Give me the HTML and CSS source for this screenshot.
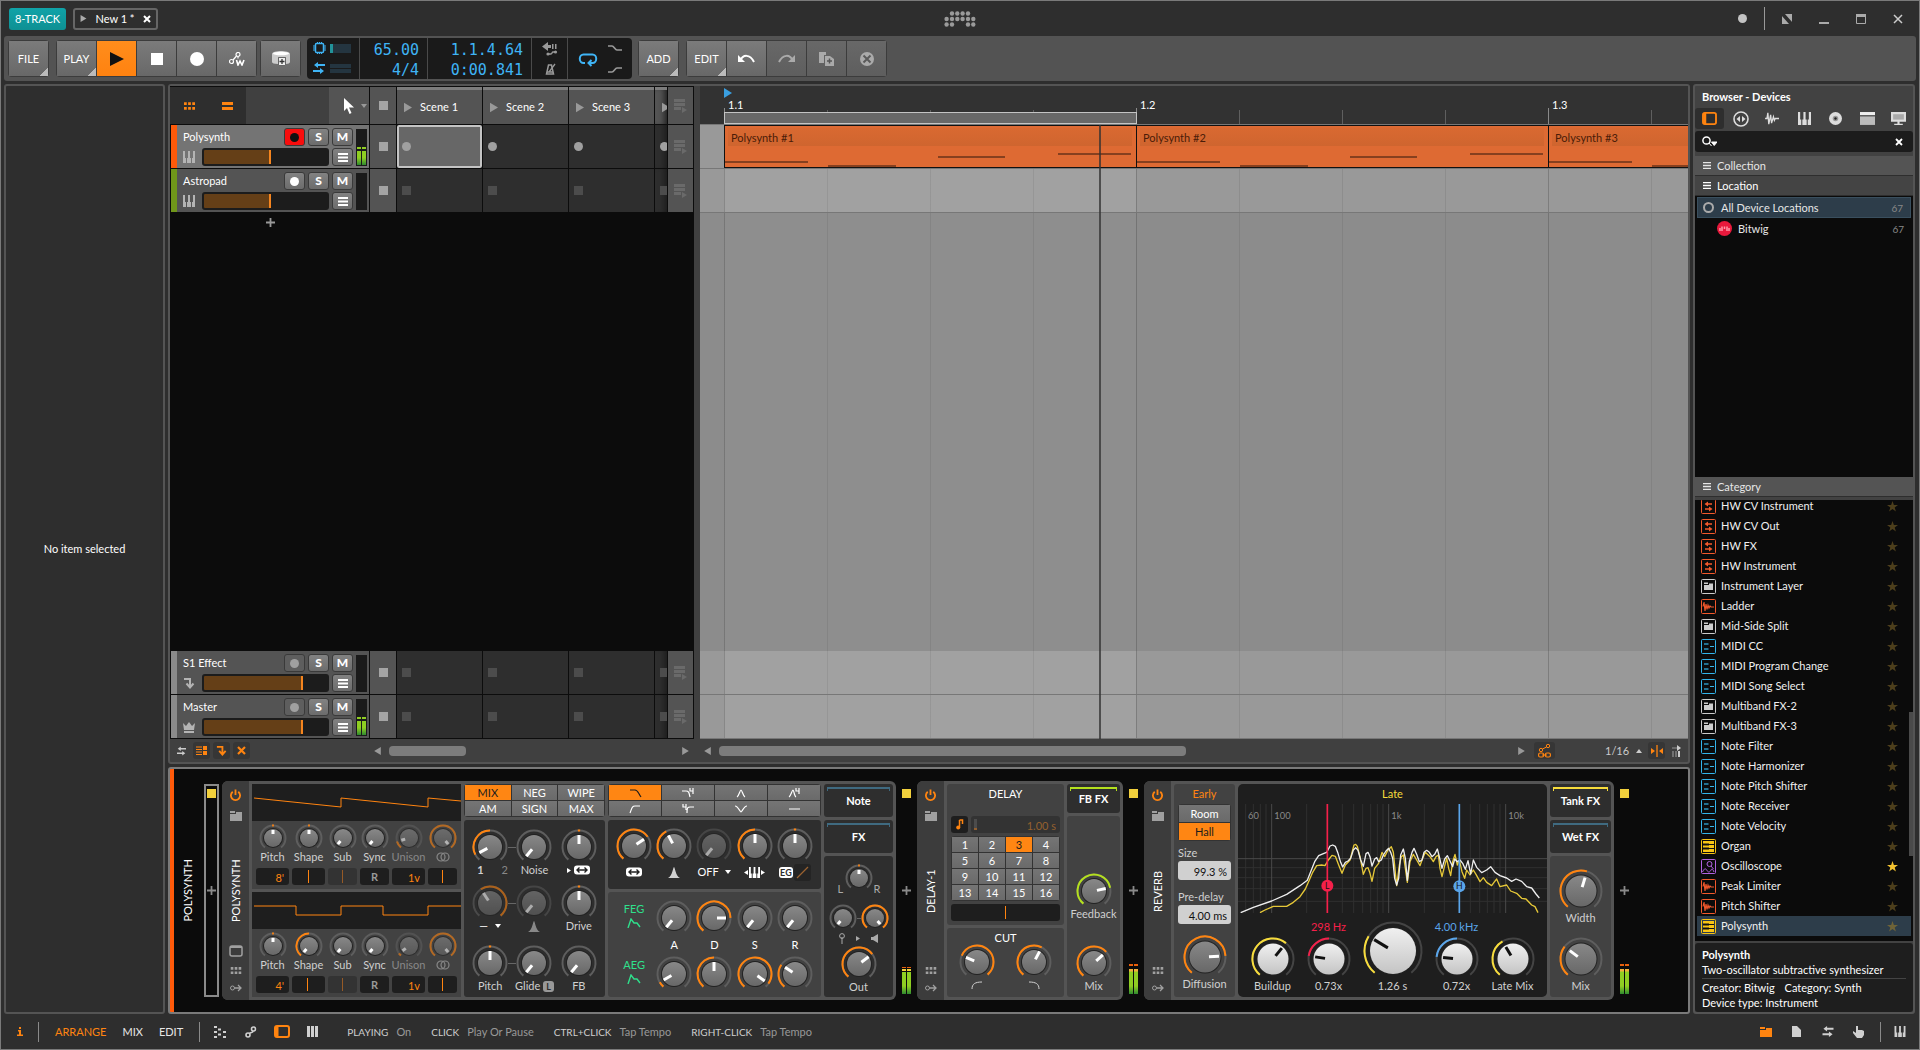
FILE: index.html
```html
<!DOCTYPE html>
<html lang="en">
<head>
    <meta charset="UTF-8">
    <meta name="viewport" content="width=device-width, initial-scale=1.0">
    <title>New 1 - Bitwig Studio</title>
    <link rel="stylesheet" href="styles.css">
</head>
<body>
    <!-- shared icons -->
    <svg class="sprite" aria-hidden="true">
        <symbol id="i-play" viewBox="0 0 10 12"><path d="M0 0 10 6 0 12z" fill="currentColor"/></symbol>
        <symbol id="i-piano" viewBox="0 0 12 12"><path d="M0 0h2v7h1v5H0zM5 0h2v7h1v5H4V7h1zM10 0h2v12H9V7h1z" fill="currentColor"/></symbol>
        <symbol id="i-menu" viewBox="0 0 10 9"><path d="M0 1h10M0 4.5h10M0 8h10" stroke="currentColor" stroke-width="2"/></symbol>
        <symbol id="i-end" viewBox="0 0 13 14"><path d="M0 1.5h11M0 5.5h11M0 9.5h7" stroke="currentColor" stroke-width="3"/><path d="M8 8l5 3-5 3z" fill="currentColor"/></symbol>
        <symbol id="i-swap" viewBox="0 0 12 12"><path d="M12 3H4M0 9h8" stroke="currentColor" stroke-width="2"/><path d="M5 0 1 3l4 3zM7 6l4 3-4 3z" fill="currentColor"/></symbol>
        <symbol id="i-send" viewBox="0 0 12 12"><path d="M1 2h6v8M3.5 6.5 7 10.5l3.500-4" fill="none" stroke="currentColor" stroke-width="2"/></symbol>
        <symbol id="i-power" viewBox="0 0 12 12"><path d="M3 2.5a5 5 0 1 0 6 0M6 0v6" fill="none" stroke="currentColor" stroke-width="2"/></symbol>
        <symbol id="i-folder" viewBox="0 0 12 10"><path d="M0 0h5v2H0zM0 3h6V1h6v9H0z" fill="currentColor"/></symbol>
        <symbol id="i-grid" viewBox="0 0 12 8"><path d="M0 1.5h3M4.5 1.5h3M9 1.5h3M0 6.5h3M4.5 6.5h3M9 6.5h3" stroke="currentColor" stroke-width="3"/></symbol>
        <symbol id="i-mod" viewBox="0 0 12 8"><circle cx="2.5" cy="4" r="2" fill="none" stroke="currentColor"/><path d="M4.5 4H11M8 1l3 3-3 3" fill="none" stroke="currentColor" stroke-width="1.3"/></symbol>
        <symbol id="i-frame" viewBox="0 0 14 12"><rect x="1" y="1" width="12" height="10" rx="2" fill="none" stroke="currentColor" stroke-width="1.5"/><path d="M1 2h12" stroke="currentColor" stroke-width="2"/></symbol>
        <symbol id="i-plus" viewBox="0 0 10 10"><path d="M5 0v10M0 5h10" stroke="currentColor" stroke-width="2"/></symbol>
        <symbol id="i-peak" viewBox="0 0 12 11"><path d="M6 0c1 0 1.5 9 6 11H0C4.5 9 5 0 6 0z" fill="currentColor"/></symbol>
        <symbol id="i-wide" viewBox="0 0 16 9"><rect width="16" height="9" rx="3" fill="currentColor"/><path d="M3 4.5h10M5.5 2 3 4.5 5.5 7M10.5 2 13 4.5 10.5 7" fill="none" stroke="#222" stroke-width="1.4"/></symbol>
        <symbol id="i-rings" viewBox="0 0 14 10"><circle cx="5" cy="5" r="4" fill="none" stroke="currentColor" stroke-width="1.2"/><circle cx="9" cy="5" r="4" fill="none" stroke="currentColor" stroke-width="1.2"/></symbol>
        <symbol id="i-env" viewBox="0 0 14 10"><path d="M1 10 4 1l3 4h3l3 4" fill="none" stroke="currentColor" stroke-width="1.4"/></symbol>
        <symbol id="i-star" viewBox="0 0 12 12"><path d="M6 0l1.5 4.3H12L8.4 7 9.7 11.5 6 8.8 2.3 11.5 3.6 7 0 4.3h4.5z" fill="currentColor"/></symbol>
        <symbol id="i-bars" viewBox="0 0 8 7"><path d="M0 .5h8M0 3.5h8M0 6.5h8" stroke="currentColor" stroke-width="1.4"/></symbol>
        <symbol id="i-tri" viewBox="0 0 6 4"><path d="M0 0h6L3 4z" fill="currentColor"/></symbol>
        <symbol id="d-hw" viewBox="0 0 15 15"><rect x=".5" y=".5" width="14" height="14" rx="1" fill="none" stroke="currentColor"/><path d="M11 5H5M4 10h6" stroke="currentColor" stroke-width="1.3"/><path d="M7 2.5 3.5 5 7 7.5zM8 7.5l3.5 2.5L8 12.5z" fill="currentColor"/></symbol>
        <symbol id="d-layer" viewBox="0 0 15 15"><rect x=".5" y=".5" width="14" height="14" rx="1" fill="none" stroke="currentColor"/><path d="M3 3.5h4V5H3zM3 6h5V4.5h4V11H3z" fill="currentColor"/></symbol>
        <symbol id="d-audio" viewBox="0 0 15 15"><rect x=".5" y=".5" width="14" height="14" rx="1" fill="none" stroke="currentColor"/><path d="M2 7.5 3 3l1 9 1-7 1 5.5L7 6l1 3 1-2 1 1h3" fill="none" stroke="currentColor" stroke-width="1.1"/></symbol>
        <symbol id="d-note" viewBox="0 0 15 15"><rect x=".5" y=".5" width="14" height="14" rx="1" fill="none" stroke="currentColor"/><path d="M3 5h4.5M3 10h4.5" stroke="currentColor" stroke-width="2" opacity=".6"/><path d="M9 7.5h4" stroke="currentColor"/></symbol>
        <symbol id="d-synth" viewBox="0 0 15 15"><rect x=".5" y=".5" width="14" height="14" rx="1" fill="none" stroke="currentColor"/><path d="M2 2h11v11H2z" fill="currentColor"/><path d="M2 5.5h11M2 9.5h11" stroke="#111"/><path d="M2 5.5h6M2 9.5h6" stroke="#111" stroke-width="2"/></symbol>
        <symbol id="d-scope" viewBox="0 0 15 15"><rect x=".5" y=".5" width="14" height="14" rx="1" fill="none" stroke="currentColor"/><circle cx="8.5" cy="5" r="2.5" fill="none" stroke="currentColor"/><path d="M10 7l2.5 3M1.5 13c2-4 3-4 4.5-1.5s3 1.5 4-.5 2-.5 3 2" fill="none" stroke="currentColor"/></symbol>
        <symbol id="clip-notes" viewBox="0 0 411 43"><path d="M0 36h83M103 40h68M213 31h67M333 28h73" stroke="#86401f" stroke-width="2"/></symbol>
    </svg>

    <div class="window">
        <header class="titlebar">
            <button class="template">8-TRACK</button>
            <div class="doc-tab">
                <svg class="doc-play"><use href="#i-play"/></svg>
                <span>New 1 *</span>
                <button class="plain" aria-label="Close project"><svg class="x-icon" viewBox="0 0 8 8"><path d="M1 1l6 6M7 1 1 7" stroke="currentColor" stroke-width="2"/></svg></button>
            </div>
            <div class="logo-wrap">
                <svg class="logo" viewBox="0 0 32 16" role="img" aria-label="Bitwig">
                    <g fill="#9a9a9a">
                        <circle cx="8" cy="2.5" r="2.2"/><circle cx="13.3" cy="2.5" r="2.2"/><circle cx="18.6" cy="2.5" r="2.2"/><circle cx="24" cy="2.5" r="2.2"/>
                        <circle cx="2.6" cy="8" r="2.2"/><circle cx="8" cy="8" r="2.2"/><circle cx="13.3" cy="8" r="2.2"/><circle cx="18.6" cy="8" r="2.2"/><circle cx="24" cy="8" r="2.2"/><circle cx="29.3" cy="8" r="2.2"/>
                        <circle cx="2.6" cy="13.5" r="2.2"/><circle cx="8" cy="13.5" r="2.2"/><circle cx="24" cy="13.5" r="2.2"/><circle cx="29.3" cy="13.5" r="2.2"/>
                    </g>
                </svg>
            </div>
            <div class="window-buttons">
                <span class="status-dot"></span>
                <span class="win-divider"></span>
                <button class="plain" aria-label="Full screen"><svg viewBox="0 0 10 10"><path d="M0 2v8h7zM3 0h7v8z" fill="#aaa"/><path d="M0 0l10 10" stroke="#2e2e2e" stroke-width="2"/></svg></button>
                <button class="plain" aria-label="Minimize"><svg viewBox="0 0 10 10"><path d="M0 9h10" stroke="#aaa" stroke-width="2"/></svg></button>
                <button class="plain" aria-label="Maximize"><svg viewBox="0 0 10 10"><path d="M.5.5h9v9h-9z" fill="none" stroke="#aaa"/><path d="M0 1.5h10" stroke="#aaa" stroke-width="3"/></svg></button>
                <button class="plain" aria-label="Close"><svg viewBox="0 0 10 10"><path d="M1 1l8 8M9 1 1 9" stroke="#ccc" stroke-width="1.5"/></svg></button>
            </div>
        </header>

        <div class="toolbar">
            <div class="btn-group"><button class="tool has-menu">FILE</button></div>
            <div class="btn-group transport">
                <button class="tool has-menu">PLAY</button>
                <button class="tool active" aria-label="Play"><svg width="14" height="14"><path d="M0 0l14 7-14 7z" fill="#111"/></svg></button>
                <button class="tool" aria-label="Stop"><svg width="12" height="12"><path d="M0 0h12v12H0z" fill="#fff"/></svg></button>
                <button class="tool" aria-label="Record"><svg width="14" height="14"><circle cx="7" cy="7" r="7" fill="#fff"/></svg></button>
                <button class="tool" aria-label="Automation write"><svg width="16" height="14" viewBox="0 0 16 14"><circle cx="2.5" cy="9.5" r="2" fill="none" stroke="#fff" stroke-width="1.2"/><circle cx="9" cy="2.5" r="2" fill="none" stroke="#fff" stroke-width="1.2"/><path d="M4 8l3.5-4M9 4.5v2" stroke="#fff" stroke-width="1.2" fill="none"/><path d="M7.5 8l1.5 5 2-4 2 4 2-5" fill="none" stroke="#fff" stroke-width="1.6"/></svg></button>
            </div>
            <div class="btn-group"><button class="tool" aria-label="Capture"><svg width="18" height="15" viewBox="0 0 18 15"><path d="M0 3c0-4 18-4 18 0v8c0 1-2 2-4 2V6H6v7c-4 0-6-1-6-2z" fill="#ccc"/><ellipse cx="9" cy="2.5" rx="8" ry="1.8" fill="#fff"/><path d="M6.5 6.5h7v8h-7z" fill="#eee" stroke="#666"/><path d="M10 8v5M7.5 10.5h5" stroke="#333" stroke-width="1.3"/></svg></button></div>

            <div class="display">
                <div class="cell cell-meters">
                    <svg width="13" height="12" viewBox="0 0 13 12"><rect x="2.5" y="1.5" width="8" height="9" rx="1" fill="none" stroke="#3fb4f5" stroke-width="1.5"/><path d="M4.5 0v1M6.5 0v1M8.5 0v1M4.5 11v1M6.5 11v1M8.5 11v1M0 4h2M0 6h2M0 8h2M11 4h2M11 6h2M11 8h2" stroke="#3fb4f5"/></svg>
                    <span class="load"><i></i></span>
                    <svg class="io" width="12" height="12"><use href="#i-swap"/></svg>
                    <span class="io-bars"><i></i><i></i></span>
                </div>
                <div class="cell cell-tempo"><span>65.00</span><span>4/4</span></div>
                <div class="cell cell-pos"><span>1.1.4.64</span><span>0:00.841</span></div>
                <div class="cell cell-click">
                    <svg width="16" height="14" viewBox="0 0 16 14"><path d="M0 4.5 6 0v3h3v3H6v3zM10 2h1.5v5H10zM13 2h1.5v5H13z" fill="#999"/><path d="M7 12h2c1 0 1-2 2-2h2" fill="none" stroke="#999" stroke-width="1.5"/><circle cx="6" cy="12" r="1.6" fill="#999"/><circle cx="13.5" cy="10" r="1.6" fill="#999"/></svg>
                    <svg width="12" height="12" viewBox="0 0 12 12"><path d="M4.5 2h3l2 9h-7z" fill="none" stroke="#999" stroke-width="1.5"/><path d="M5 9 11 1M3 9h6" stroke="#999" stroke-width="1.3"/></svg>
                </div>
                <div class="cell cell-loop">
                    <svg width="18" height="12" viewBox="0 0 18 12"><path d="M6 10H4.5A3.5 4 0 0 1 4.5 1.500h9a3.5 4 0 0 1 0 8.500H10M12.5 7 9.5 10l3 3" fill="none" stroke="#3fb4f5" stroke-width="2"/></svg>
                    <div class="punch">
                        <svg width="14" height="6" viewBox="0 0 14 6"><path d="M0 1h4c2 0 3 4 5 4h5" fill="none" stroke="#999" stroke-width="1.6"/></svg>
                        <svg width="14" height="6" viewBox="0 0 14 6"><path d="M0 5h4c2 0 3-4 5-4h5" fill="none" stroke="#999" stroke-width="1.6"/></svg>
                    </div>
                </div>
            </div>

            <div class="btn-group"><button class="tool has-menu">ADD</button></div>
            <div class="btn-group">
                <button class="tool has-menu">EDIT</button>
                <button class="tool" aria-label="Undo"><svg width="17" height="9" viewBox="0 0 17 9"><path d="M2 7c3-7 10-7 14 1" fill="none" stroke="#fff" stroke-width="2"/><path d="M0 1v7h7z" fill="#fff"/></svg></button>
                <button class="tool dim" aria-label="Redo"><svg width="17" height="9" viewBox="0 0 17 9"><path d="M1 8C5 0 12 0 15 7" fill="none" stroke="#aaa" stroke-width="2"/><path d="M17 1v7h-7z" fill="#aaa"/></svg></button>
                <button class="tool dim" aria-label="Duplicate"><svg width="15" height="14" viewBox="0 0 15 14"><path d="M0 0h7v3H5v8H0z" fill="#aaa"/><path d="M6 4h5l4 3v7H6z" fill="#aaa"/><path d="M10.5 6.5v5M8 9h5" stroke="#555" stroke-width="1.5"/></svg></button>
                <button class="tool dim" aria-label="Delete"><svg width="14" height="14" viewBox="0 0 14 14"><circle cx="7" cy="7" r="7" fill="#aaa"/><path d="M3.5 3.5l7 7M10.5 3.5l-7 7" stroke="#5a5a5a" stroke-width="2"/></svg></button>
            </div>
        </div>

        <main class="workspace">
            <aside class="inspector">No item selected</aside>

            <div class="center">
                <section class="arranger">
                    <div class="launcher">
                        <div class="row row-head">
                            <div class="head-tools">
                                <div class="view-toggles">
                                    <button class="plain" aria-label="Clip launcher"><svg width="11" height="8"><use href="#i-grid"/></svg></button>
                                    <button class="plain" aria-label="Arranger"><svg width="11" height="8" viewBox="0 0 11 8"><path d="M0 1.5h11M0 6.5h11" stroke="currentColor" stroke-width="3"/></svg></button>
                                </div>
                                <button class="plain pointer-tool" aria-label="Pointer tool">
                                    <svg width="10" height="16" viewBox="0 0 10 16"><path d="M0 0v13l3-3 2.5 6 2-1L5 9.5h5z" fill="#fff"/></svg>
                                    <svg class="tiny" width="6" height="4"><use href="#i-tri"/></svg>
                                </button>
                            </div>
                            <div class="stop-cell"><i></i></div>
                            <div class="scene"><svg><use href="#i-play"/></svg>Scene 1</div>
                            <div class="scene"><svg><use href="#i-play"/></svg>Scene 2</div>
                            <div class="scene"><svg><use href="#i-play"/></svg>Scene 3</div>
                            <div class="scene cut"><svg><use href="#i-play"/></svg></div>
                            <div class="end-cell"><svg><use href="#i-end"/></svg></div>
                        </div>

                        <div class="row">
                            <div class="track orange selected">
                                <span class="name">Polysynth</span>
                                <button class="mini armed" aria-label="Record arm"><i class="dot"></i></button>
                                <button class="mini">S</button>
                                <button class="mini">M</button>
                                <svg class="kind"><use href="#i-piano"/></svg>
                                <input type="range" class="fader" aria-label="Polysynth volume" value="54" style="--level: 54%">
                                <button class="mini" aria-label="Track menu"><svg width="10" height="9"><use href="#i-menu"/></svg></button>
                                <div class="meter on"><i></i><i></i></div>
                            </div>
                            <div class="stop-cell"><i></i></div>
                            <div class="slot focus"><i class="round"></i></div>
                            <div class="slot"><i class="round"></i></div>
                            <div class="slot"><i class="round"></i></div>
                            <div class="slot cut"><i class="round"></i></div>
                            <div class="end-cell"><svg><use href="#i-end"/></svg></div>
                        </div>

                        <div class="row">
                            <div class="track green">
                                <span class="name">Astropad</span>
                                <button class="mini" aria-label="Record arm"><i class="dot"></i></button>
                                <button class="mini">S</button>
                                <button class="mini">M</button>
                                <svg class="kind"><use href="#i-piano"/></svg>
                                <input type="range" class="fader" aria-label="Astropad volume" value="54" style="--level: 54%">
                                <button class="mini" aria-label="Track menu"><svg width="10" height="9"><use href="#i-menu"/></svg></button>
                                <div class="meter"></div>
                            </div>
                            <div class="stop-cell"><i></i></div>
                            <div class="slot"><i></i></div>
                            <div class="slot"><i></i></div>
                            <div class="slot"><i></i></div>
                            <div class="slot cut"><i></i></div>
                            <div class="end-cell"><svg><use href="#i-end"/></svg></div>
                        </div>

                        <div class="empty-tracks">
                            <button class="plain" aria-label="Add track"><svg width="9" height="9"><use href="#i-plus"/></svg></button>
                        </div>

                        <div class="row">
                            <div class="track">
                                <span class="name">S1 Effect</span>
                                <button class="mini off" aria-label="Record arm"><i class="dot"></i></button>
                                <button class="mini">S</button>
                                <button class="mini">M</button>
                                <svg class="kind"><use href="#i-send"/></svg>
                                <input type="range" class="fader" aria-label="S1 Effect volume" value="80" style="--level: 80%">
                                <button class="mini" aria-label="Track menu"><svg width="10" height="9"><use href="#i-menu"/></svg></button>
                                <div class="meter"></div>
                            </div>
                            <div class="stop-cell"><i></i></div>
                            <div class="slot"><i></i></div>
                            <div class="slot"><i></i></div>
                            <div class="slot"><i></i></div>
                            <div class="slot cut"><i></i></div>
                            <div class="end-cell"><svg><use href="#i-end"/></svg></div>
                        </div>

                        <div class="row">
                            <div class="track">
                                <span class="name">Master</span>
                                <button class="mini off" aria-label="Record arm"><i class="dot"></i></button>
                                <button class="mini">S</button>
                                <button class="mini">M</button>
                                <svg class="kind" viewBox="0 0 12 12"><path d="M0 2l3 3 3-4 3 4 3-3-1 7H1zM1 10h10v2H1z" fill="currentColor"/></svg>
                                <input type="range" class="fader" aria-label="Master volume" value="80" style="--level: 80%">
                                <button class="mini" aria-label="Track menu"><svg width="10" height="9"><use href="#i-menu"/></svg></button>
                                <div class="meter on"><i></i><i></i></div>
                            </div>
                            <div class="stop-cell"><i></i></div>
                            <div class="slot"><i></i></div>
                            <div class="slot"><i></i></div>
                            <div class="slot"><i></i></div>
                            <div class="slot cut"><i></i></div>
                            <div class="end-cell"><svg><use href="#i-end"/></svg></div>
                        </div>
                    </div>

                    <div class="timeline">
                        <div class="ruler">
                            <svg class="start-flag" width="8" height="10"><path d="M0 0l8 5-8 5z" fill="#3a9fe0"/></svg>
                            <div class="bars"><span>1.1</span><span>1.2</span><span>1.3</span></div>
                            <div class="loop"></div>
                        </div>
                        <div class="lane clips">
                            <div class="clip"><span>Polysynth #1</span><svg><use href="#clip-notes"/></svg></div>
                            <div class="clip"><span>Polysynth #2</span><svg><use href="#clip-notes"/></svg></div>
                            <div class="clip"><span>Polysynth #3</span><svg><use href="#clip-notes"/></svg></div>
                        </div>
                        <div class="lane"></div>
                        <div class="lane rest"></div>
                        <div class="lane"></div>
                        <div class="lane"></div>
                        <div class="playhead"></div>
                    </div>

                    <div class="foot launcher-foot">
                        <button class="plain foot-btn light" aria-label="Track I/O"><svg width="9" height="10"><use href="#i-swap"/></svg></button>
                        <button class="plain foot-btn on" aria-label="Track list"><svg width="11" height="9" viewBox="0 0 11 9"><path d="M0 1h6M0 3.5h6M0 6h6M0 8.5h6" stroke="currentColor" stroke-width="1.2"/><path d="M7 0h4v4H7zM7 5h4v4H7z" fill="currentColor"/></svg></button>
                        <button class="plain foot-btn on" aria-label="Effect tracks"><svg width="11" height="11"><use href="#i-send"/></svg></button>
                        <button class="plain foot-btn on" aria-label="Deactivated tracks"><svg width="9" height="9" viewBox="0 0 9 9"><path d="M1 1l7 7M8 1 1 8" stroke="currentColor" stroke-width="2.2"/></svg></button>
                        <div class="scroller">
                            <svg class="flip" width="7" height="8"><use href="#i-play"/></svg>
                            <div class="track-line"><div class="thumb short"></div></div>
                            <svg width="7" height="8"><use href="#i-play"/></svg>
                        </div>
                    </div>
                    <div class="foot">
                        <div class="scroller">
                            <svg class="flip" width="7" height="8"><use href="#i-play"/></svg>
                            <div class="track-line"><div class="thumb long"></div></div>
                            <svg width="7" height="8"><use href="#i-play"/></svg>
                        </div>
                        <button class="plain foot-btn on wide" aria-label="Automation follow"><svg width="13" height="14" viewBox="0 0 13 14"><circle cx="3" cy="6" r="1.7" fill="none" stroke="currentColor"/><circle cx="10" cy="2" r="1.7" fill="none" stroke="currentColor"/><path d="M4.5 5 8.5 3" stroke="currentColor"/><rect x=".6" y="9" width="5" height="4" rx="1.5" fill="none" stroke="currentColor" stroke-width="1.2"/><rect x="7.4" y="9" width="5" height="4" rx="1.5" fill="none" stroke="currentColor" stroke-width="1.2"/><path d="M4 11h5" stroke="currentColor"/></svg></button>
                        <select class="beat-grid" aria-label="Beat grid"><option>1/16</option></select>
                        <svg class="tiny up" width="6" height="4"><use href="#i-tri"/></svg>
                        <button class="plain foot-btn on" aria-label="Snap"><svg width="12" height="12" viewBox="0 0 12 12"><path d="M0 3l4 3-4 3zM12 3 8 6l4 3z" fill="currentColor"/><path d="M6 0v12" stroke="currentColor" stroke-width="1.3"/></svg></button>
                        <button class="plain foot-btn light" aria-label="Follow"><svg width="9" height="12" viewBox="0 0 9 12"><path d="M0 3h6M1 6v6M4 6v6" stroke="currentColor" stroke-width="1.2" opacity=".6"/><path d="M7 6v6" stroke="currentColor" stroke-width="2"/><path d="M5 0l4 3-4 3z" fill="currentColor"/></svg></button>
                    </div>
                </section>

                <section class="devices">
                    <div class="chain-name"><span>POLYSYNTH</span></div>
                    <div class="port boxed"><i class="led"></i><svg><use href="#i-plus"/></svg></div>

                    <article class="device">
                        <div class="device-head">
                            <svg class="power"><use href="#i-power"/></svg>
                            <svg class="preset"><use href="#i-folder"/></svg>
                            <span>POLYSYNTH</span>
                            <svg class="ico-frame"><use href="#i-frame"/></svg>
                            <svg class="ico-grid"><use href="#i-grid"/></svg>
                            <svg class="ico-mod"><use href="#i-mod"/></svg>
                        </div>

                        <div class="col oscs">
                            <div class="osc">
                                <svg class="wave" viewBox="0 0 209 37" preserveAspectRatio="none"><path d="M2 14l87 9V14l87 9V14l33 3" /></svg>
                                <div class="osc-grid">
                                    <label class="knob small" data-from="50"><input type="range" value="50"><span>Pitch</span></label>
                                    <label class="knob small" data-from="50"><input type="range" value="50"><span>Shape</span></label>
                                    <label class="knob small"><input type="range" value="0"><span>Sub</span></label>
                                    <label class="knob small"><input type="range" value="0"><span>Sync</span></label>
                                    <label class="knob small dim"><input type="range" value="12"><span>Unison</span></label>
                                    <label class="knob small dim"><input type="range" value="100" aria-label="Stereo"><span><svg width="14" height="10"><use href="#i-rings"/></svg></span></label>
                                    <input type="text" class="field" aria-label="Octave" value="8'">
                                    <input type="range" class="bar" aria-label="Fine" value="50">
                                    <input type="range" class="bar faint" aria-label="Sub fine" value="50">
                                    <button class="retrig">R</button>
                                    <input type="text" class="field" aria-label="Voices" value="1v">
                                    <input type="range" class="bar" aria-label="Pan" value="50">
                                </div>
                            </div>
                            <div class="osc">
                                <svg class="wave" viewBox="0 0 209 37" preserveAspectRatio="none"><path d="M2 14h42v9h45v-9h42v9h45v-9h33"/></svg>
                                <div class="osc-grid">
                                    <label class="knob small" data-from="50"><input type="range" value="50"><span>Pitch</span></label>
                                    <label class="knob small" data-from="50"><input type="range" value="0"><span>Shape</span></label>
                                    <label class="knob small"><input type="range" value="0"><span>Sub</span></label>
                                    <label class="knob small"><input type="range" value="0"><span>Sync</span></label>
                                    <label class="knob small dim"><input type="range" value="5"><span>Unison</span></label>
                                    <label class="knob small dim"><input type="range" value="100" aria-label="Stereo"><span><svg width="14" height="10"><use href="#i-rings"/></svg></span></label>
                                    <input type="text" class="field" aria-label="Octave" value="4'">
                                    <input type="range" class="bar" aria-label="Fine" value="46">
                                    <input type="range" class="bar faint" aria-label="Sub fine" value="50">
                                    <button class="retrig">R</button>
                                    <input type="text" class="field" aria-label="Voices" value="1v">
                                    <input type="range" class="bar" aria-label="Pan" value="50">
                                </div>
                            </div>
                        </div>

                        <div class="col mixer">
                            <div class="switches three">
                                <button class="on">MIX</button><button>NEG</button><button>WIPE</button>
                                <button>AM</button><button>SIGN</button><button>MAX</button>
                            </div>
                            <div class="well mix-grid">
                                <label class="knob link" data-from="50"><input type="range" value="8"><span class="one-two"><b>1</b><em>2</em></span></label>
                                <label class="knob"><input type="range" value="0"><span>Noise</span></label>
                                <label class="knob" data-from="50"><input type="range" value="50" aria-label="Filter stereo"><span class="lit"><svg class="right-tri" width="4" height="5"><use href="#i-play"/></svg><svg width="16" height="10"><use href="#i-wide"/></svg></span></label>
                                <label class="knob link dim" data-from="100"><input type="range" value="38" aria-label="Filter FM"><span class="lit mode">— <svg width="6" height="4"><use href="#i-tri"/></svg></span></label>
                                <label class="knob dim gray-arc"><input type="range" value="0" aria-label="Resonance"><span><svg width="12" height="11"><use href="#i-peak"/></svg></span></label>
                                <label class="knob" data-from="50"><input type="range" value="50"><span>Drive</span></label>
                                <label class="knob link" data-from="50"><input type="range" value="50"><span>Pitch</span></label>
                                <label class="knob"><input type="range" value="0"><span>Glide <b class="badge">L</b></span></label>
                                <label class="knob"><input type="range" value="0"><span>FB</span></label>
                            </div>
                        </div>

                        <div class="col filter">
                            <div class="switches four">
                                <button class="on" aria-label="Low-pass"><svg viewBox="0 0 20 10"><path d="M5 2h5c3 0 3 3 6 7"/></svg></button>
                                <button aria-label="Low-pass 4"><svg viewBox="0 0 20 10"><path d="M4 3h4c3 0 3 2 4 6M12 0v3h3M15 0v6"/></svg></button>
                                <button aria-label="Band-pass"><svg viewBox="0 0 20 10"><path d="M6 9c2-1 3-7 4-7s2 6 4 7"/></svg></button>
                                <button aria-label="Band-pass 4"><svg viewBox="0 0 20 10"><path d="M5 9c2-1 3-7 4-7s1 6 3 7M12 0v3h3M15 0v6"/></svg></button>
                                <button aria-label="High-pass"><svg viewBox="0 0 20 10"><path d="M5 9c2-5 2-7 5-7h5"/></svg></button>
                                <button aria-label="High-pass 4"><svg viewBox="0 0 20 10"><path d="M9 9c0-6 1-6 3-6h4M5 0v3h3M8 0v6"/></svg></button>
                                <button aria-label="Notch"><svg viewBox="0 0 20 10"><path d="M4 2c3 0 5 6 6 6s3-6 6-6"/></svg></button>
                                <button aria-label="Off"><svg viewBox="0 0 20 10"><path d="M5 5h11"/></svg></button>
                            </div>
                            <div class="well five-grid top">
                                <label class="knob"><input type="range" value="70" aria-label="Cutoff"><span class="lit"><svg width="16" height="10"><use href="#i-wide"/></svg></span></label>
                                <label class="knob"><input type="range" value="40" aria-label="Resonance"><span><svg width="12" height="11"><use href="#i-peak"/></svg></span></label>
                                <div class="knob-with-select">
                                    <label class="knob dim gray-arc"><input type="range" value="0" aria-label="Waveshaper"></label>
                                    <div class="pick"><select aria-label="Shaper mode"><option>OFF</option></select><svg width="6" height="4"><use href="#i-tri"/></svg></div>
                                </div>
                                <label class="knob"><input type="range" value="50" aria-label="Key tracking"><span class="lit keys"><svg class="flip" width="4" height="5"><use href="#i-play"/></svg><svg width="11" height="11"><use href="#i-piano"/></svg><svg width="4" height="5"><use href="#i-play"/></svg></span></label>
                                <label class="knob" data-from="50"><input type="range" value="50" aria-label="Envelope amount"><span class="lit eg"><b class="badge white">EG</b><svg class="curve" width="17" height="17" viewBox="0 0 17 17"><path d="M3 14 14 3" stroke="#9a6230" stroke-width="1.3"/></svg></span></label>
                            </div>
                            <div class="panel five-grid egs">
                                <div class="eg-name">FEG<svg width="14" height="10"><use href="#i-env"/></svg></div>
                                <label class="knob"><input type="range" value="0"><span>A</span></label>
                                <label class="knob"><input type="range" value="82"><span>D</span></label>
                                <label class="knob"><input type="range" value="0"><span>S</span></label>
                                <label class="knob"><input type="range" value="0"><span>R</span></label>
                                <div class="eg-name">AEG<svg width="14" height="10"><use href="#i-env"/></svg></div>
                                <label class="knob"><input type="range" value="7" aria-label="Amp attack"></label>
                                <label class="knob"><input type="range" value="50" aria-label="Amp decay"></label>
                                <label class="knob"><input type="range" value="95" aria-label="Amp sustain"></label>
                                <label class="knob"><input type="range" value="30" aria-label="Amp release"></label>
                            </div>
                        </div>

                        <div class="col fx-col">
                            <button class="slot-btn">Note</button>
                            <button class="slot-btn">FX</button>
                            <div class="well output">
                                <div class="pan-row"><span>L</span><label class="knob small" data-from="50"><input type="range" value="50" aria-label="Pan"></label><span>R</span></div>
                                <div class="vel-row">
                                    <label class="knob small link"><input type="range" value="0" aria-label="Velocity"></label>
                                    <label class="knob small"><input type="range" value="100" aria-label="Gain"></label>
                                </div>
                                <div class="vel-icons">
                                    <svg width="6" height="11" viewBox="0 0 6 11"><circle cx="3" cy="3" r="2.4" fill="none" stroke="currentColor"/><path d="M3 4v7" stroke="currentColor"/></svg>
                                    <svg width="4" height="5"><use href="#i-play"/></svg>
                                    <svg width="7" height="9" viewBox="0 0 7 9"><path d="M0 3h2l5-3v9L2 6H0z" fill="currentColor"/></svg>
                                </div>
                                <label class="knob"><input type="range" value="69"><span>Out</span></label>
                            </div>
                        </div>
                    </article>

                    <div class="port"><i class="led"></i><svg><use href="#i-plus"/></svg><div class="vu"><i></i><i></i></div></div>

                    <article class="device">
                        <div class="device-head">
                            <svg class="power"><use href="#i-power"/></svg>
                            <svg class="preset"><use href="#i-folder"/></svg>
                            <span>DELAY-1</span>
                            <svg class="ico-grid"><use href="#i-grid"/></svg>
                            <svg class="ico-mod"><use href="#i-mod"/></svg>
                        </div>
                        <div class="col delay-main">
                            <div class="panel delay-time">
                                <h2>DELAY</h2>
                                <div class="time-row">
                                    <button class="note-btn" aria-label="Tempo sync"><svg width="8" height="11" viewBox="0 0 8 11"><circle cx="2.2" cy="8.5" r="2" fill="currentColor"/><path d="M3.5 8.5V1M3.5 1h3v4" fill="none" stroke="currentColor" stroke-width="1.5"/></svg></button>
                                    <input type="text" class="time-field" aria-label="Delay time" value="1.00 s">
                                </div>
                                <div class="switches sixteen">
                                    <button>1</button><button>2</button><button class="on">3</button><button>4</button>
                                    <button>5</button><button>6</button><button>7</button><button>8</button>
                                    <button>9</button><button>10</button><button>11</button><button>12</button>
                                    <button>13</button><button>14</button><button>15</button><button>16</button>
                                </div>
                                <input type="range" class="bar" aria-label="Delay offset" value="50">
                            </div>
                            <div class="panel cut-panel">
                                <h2>CUT</h2>
                                <div class="cut-row">
                                    <label class="knob" data-from="100"><input type="range" value="26" aria-label="Low cut"><span><svg width="12" height="8" viewBox="0 0 12 8"><path d="M1 8c0-5 3-7 10-7" fill="none" stroke="currentColor"/></svg></span></label>
                                    <label class="knob"><input type="range" value="60" aria-label="High cut"><span><svg width="12" height="8" viewBox="0 0 12 8"><path d="M1 1c7 0 10 2 10 7" fill="none" stroke="currentColor"/></svg></span></label>
                                </div>
                            </div>
                        </div>
                        <div class="col delay-fb">
                            <button class="slot-btn lime">FB FX</button>
                            <div class="panel stack-knobs">
                                <label class="knob lime"><input type="range" value="78"><span>Feedback</span></label>
                                <label class="knob"><input type="range" value="67"><span>Mix</span></label>
                            </div>
                        </div>
                    </article>

                    <div class="port"><i class="led"></i><svg><use href="#i-plus"/></svg><div class="vu hot"><i></i><i></i></div></div>

                    <article class="device">
                        <div class="device-head">
                            <svg class="power"><use href="#i-power"/></svg>
                            <svg class="preset"><use href="#i-folder"/></svg>
                            <span>REVERB</span>
                            <svg class="ico-grid"><use href="#i-grid"/></svg>
                            <svg class="ico-mod"><use href="#i-mod"/></svg>
                        </div>
                        <div class="panel early">
                            <h2>Early</h2>
                            <div class="switches one"><button>Room</button><button class="on">Hall</button></div>
                            <label for="size">Size</label>
                            <input type="text" id="size" value="99.3 %">
                            <label for="predelay">Pre-delay</label>
                            <input type="text" id="predelay" value="4.00 ms">
                            <label class="knob large"><input type="range" value="81"><span>Diffusion</span></label>
                        </div>
                        <div class="late">
                            <h2>Late</h2>
                            <svg class="spectrum" viewBox="54 117 927 327">
                                <path d="M77 117v327M100 117v327M121 117v327M138 117v327M260 117v327M367 117v327M401 117v327M428 117v327M452 117v327M472 117v327M489 117v327M613 117v327M673 117v327M751 117v327M779 117v327M802 117v327M822 117v327M840 117v327M54 308h927M54 338h927M54 371h927M54 409h927" stroke="#303030" stroke-width="3"/>
                                <path d="M155 117v327M506 117v327M857 117v327M54 281h927" stroke="#4a4a4a" stroke-width="3"/>
                                <g class="freq">
                                    <text x="84" y="161">60</text><text x="163" y="161">100</text><text x="514" y="161">1k</text><text x="865" y="161">10k</text>
                                </g>
                                <g fill="none" stroke-width="4" stroke-linejoin="round">
                                    <path stroke="#e6c838" d="M120 443l15-8 25-11h40l20-12 20-17 16-23 12-27 10-23 12-20 15-2 10 2 10-17 11-14 10 3 10 26 10 25 10-25 8-8 6-7 6-23 6-22 5-2 5 6 8 31 10 53 8-18 6-2 6 17 6 24 8-39 12-15 10-33 8 13 10-20 10-10 6 17 10 100 8-62 6-25 6-5 6 40 6 42 8-62 10-22 10 17 10 17 8-22 8-18 14 13 10 15 8-15 7-5 5 40 6 25 6-25 8-30 6 30 6 22 6-42 7-22 7 32 6-15 8 35 8 20 6-25 10 15 10-15 8 13 12 22 10-12 10 14 15 10 7-10 8-10 10 23 20-5 12 18 18 7 15 15 13 2 17 18 10 5 9 18"/>
                                    <path stroke="#eee" d="M62 443l38-16 55-19 45-20 40-26 22-16 10-26 12-30 12-18 16-7 8-3 10-19 8-3 8 4 8 21 8 27 6 14 8-14 8-4 8-8 8-25 7-7 7 8 8 29 8 19 8-38 6-4 6 13 6 28 8-21 6-4 6 12 8-5 6-15 8-12 8-8 6 12 6 18 6 60 6 20 6-20 6-70 8-18 6 28 6 66 6-56 8-28 6-12 8 18 8 22 8-5 6-23 8-6 8 6 8 13 8-7 8-16 6 23 8 35 8-28 8-10 8 16 8 17 6-23 8 8 8-5 8 10 8 18 8-26 8 40 8-42 10 22 15 16 15-8 12-10 13 17 15 10 20 7 15 10 13-7 17 7 15 16 15 4 13 18 10 12"/>
                                </g>
                                <path d="M322 117v327" stroke="#f5204a" stroke-width="5"/><circle cx="322" cy="362" r="18" fill="#f5204a"/>
                                <path d="M718 117v327" stroke="#5aa5ea" stroke-width="5"/><circle cx="718" cy="364" r="18" fill="#5aa5ea"/>
                                <g class="handles"><text x="322" y="371">L</text><text x="718" y="373">H</text></g>
                            </svg>
                            <div class="late-knobs">
                                <label class="knob large white yellow"><input type="range" value="64"><span>Buildup</span></label>
                                <div class="banded red"><span>298 Hz</span><label class="knob large white" data-from="50"><input type="range" value="21"><span>0.73x</span></label></div>
                                <label class="knob huge white yellow"><input type="range" value="29"><span>1.26 s</span></label>
                                <div class="banded blue"><span>4.00 kHz</span><label class="knob large white" data-from="50"><input type="range" value="20"><span>0.72x</span></label></div>
                                <label class="knob large white yellow"><input type="range" value="39"><span>Late Mix</span></label>
                            </div>
                        </div>
                        <div class="col reverb-fx">
                            <button class="slot-btn gold">Tank FX</button>
                            <button class="slot-btn">Wet FX</button>
                            <div class="panel stack-knobs">
                                <label class="knob large"><input type="range" value="56"><span>Width</span></label>
                                <label class="knob large"><input type="range" value="31"><span>Mix</span></label>
                            </div>
                        </div>
                    </article>

                    <div class="port"><i class="led"></i><svg><use href="#i-plus"/></svg><div class="vu hot"><i></i><i></i></div></div>
                </section>
            </div>

            <aside class="browser">
                <h1>Browser - Devices</h1>
                <nav class="browser-tabs">
                    <button class="plain on" aria-label="Everything"><svg viewBox="0 0 16 14"><rect x="1" y="1" width="14" height="12" rx="2" fill="none" stroke="#ff8410" stroke-width="2"/><path d="M3 1v12" stroke="#ff8410" stroke-width="3"/></svg></button>
                    <button class="plain" aria-label="Devices"><svg class="big" viewBox="0 0 16 16"><circle cx="8" cy="8" r="7" fill="none" stroke="#ddd" stroke-width="1.6"/><path d="M7 5v6L3.5 8zM9 5v6l3.5-3z" fill="#ddd"/></svg></button>
                    <button class="plain" aria-label="Samples"><svg viewBox="0 0 16 14"><path d="M0 7h2l1-6 1 12 2-10 1 9 2-7 1 4 1-2h4" fill="none" stroke="#ddd" stroke-width="1.4"/></svg></button>
                    <button class="plain" aria-label="Presets"><svg viewBox="0 0 12 12"><use href="#i-piano"/></svg></button>
                    <button class="plain" aria-label="Multi-samples"><svg viewBox="0 0 14 14"><circle cx="7" cy="7" r="7" fill="#ddd"/><circle cx="7" cy="7" r="3" fill="#999"/><circle cx="7" cy="7" r="1.3" fill="#222"/></svg></button>
                    <button class="plain" aria-label="Clips"><svg viewBox="0 0 14 12"><path d="M0 0h14v12H0z" fill="#bbb"/><path d="M0 0h14v3H0z" fill="#eee"/><path d="M0 3.5h14" stroke="#333"/></svg></button>
                    <button class="plain" aria-label="Files"><svg viewBox="0 0 14 12"><path d="M0 0h14v9H0zM6 9h2v2h3v1H3v-1h3z" fill="#ddd"/><path d="M2 2h10v5H2z" fill="#aaa"/></svg></button>
                </nav>
                <div class="search">
                    <svg width="15" height="11" viewBox="0 0 15 11"><circle cx="4.5" cy="4.5" r="3.6" fill="none" stroke="#fff" stroke-width="1.5"/><path d="M7 7l2.5 3M9.5 6H15l-2.8 3.5z" stroke="#fff" fill="#fff" stroke-width="1"/></svg>
                    <input type="text" aria-label="Search devices">
                    <button class="plain" aria-label="Clear search"><svg width="8" height="8" viewBox="0 0 8 8"><path d="M1 1l6 6M7 1 1 7" stroke="#fff" stroke-width="1.8"/></svg></button>
                </div>
                <button class="section light"><svg width="8" height="7"><use href="#i-bars"/></svg>Collection</button>
                <button class="section"><svg width="8" height="7"><use href="#i-bars"/></svg>Location</button>
                <ul class="locations">
                    <li class="current"><i class="ring"></i>All Device Locations<em>67</em></li>
                    <li class="child"><svg width="15" height="15" viewBox="0 0 15 15"><circle cx="7.5" cy="7.5" r="7.5" fill="#e8193c"/><path d="M3 10V7M5 10V5.5M7.500 8V5.5M10 10V5.5M12 10V7" stroke="#ff9aaa" stroke-width="1.5"/></svg>Bitwig<em>67</em></li>
                </ul>
                <button class="section light"><svg width="8" height="7"><use href="#i-bars"/></svg>Category</button>
                <div class="list-wrap">
                    <ul class="device-list">
                        <li><svg class="hw"><use href="#d-hw"/></svg>HW CV Instrument<svg class="star"><use href="#i-star"/></svg></li>
                        <li><svg class="hw"><use href="#d-hw"/></svg>HW CV Out<svg class="star"><use href="#i-star"/></svg></li>
                        <li><svg class="hw"><use href="#d-hw"/></svg>HW FX<svg class="star"><use href="#i-star"/></svg></li>
                        <li><svg class="hw"><use href="#d-hw"/></svg>HW Instrument<svg class="star"><use href="#i-star"/></svg></li>
                        <li><svg class="layer"><use href="#d-layer"/></svg>Instrument Layer<svg class="star"><use href="#i-star"/></svg></li>
                        <li><svg class="hw"><use href="#d-audio"/></svg>Ladder<svg class="star"><use href="#i-star"/></svg></li>
                        <li><svg class="layer"><use href="#d-layer"/></svg>Mid-Side Split<svg class="star"><use href="#i-star"/></svg></li>
                        <li><svg class="note"><use href="#d-note"/></svg>MIDI CC<svg class="star"><use href="#i-star"/></svg></li>
                        <li><svg class="note"><use href="#d-note"/></svg>MIDI Program Change<svg class="star"><use href="#i-star"/></svg></li>
                        <li><svg class="note"><use href="#d-note"/></svg>MIDI Song Select<svg class="star"><use href="#i-star"/></svg></li>
                        <li><svg class="layer"><use href="#d-layer"/></svg>Multiband FX-2<svg class="star"><use href="#i-star"/></svg></li>
                        <li><svg class="layer"><use href="#d-layer"/></svg>Multiband FX-3<svg class="star"><use href="#i-star"/></svg></li>
                        <li><svg class="note"><use href="#d-note"/></svg>Note Filter<svg class="star"><use href="#i-star"/></svg></li>
                        <li><svg class="note"><use href="#d-note"/></svg>Note Harmonizer<svg class="star"><use href="#i-star"/></svg></li>
                        <li><svg class="note"><use href="#d-note"/></svg>Note Pitch Shifter<svg class="star"><use href="#i-star"/></svg></li>
                        <li><svg class="note"><use href="#d-note"/></svg>Note Receiver<svg class="star"><use href="#i-star"/></svg></li>
                        <li><svg class="note"><use href="#d-note"/></svg>Note Velocity<svg class="star"><use href="#i-star"/></svg></li>
                        <li><svg class="synth"><use href="#d-synth"/></svg>Organ<svg class="star"><use href="#i-star"/></svg></li>
                        <li><svg class="scope"><use href="#d-scope"/></svg>Oscilloscope<svg class="star fav"><use href="#i-star"/></svg></li>
                        <li><svg class="hw"><use href="#d-audio"/></svg>Peak Limiter<svg class="star"><use href="#i-star"/></svg></li>
                        <li><svg class="hw"><use href="#d-audio"/></svg>Pitch Shifter<svg class="star"><use href="#i-star"/></svg></li>
                        <li class="current"><svg class="synth"><use href="#d-synth"/></svg>Polysynth<svg class="star"><use href="#i-star"/></svg></li>
                    </ul>
                    <div class="list-thumb"></div>
                </div>
                <div class="info">
                    <strong>Polysynth</strong>
                    <p>Two-oscillator subtractive synthesizer</p>
                    <hr>
                    <p><span>Creator: Bitwig</span><span>Category: Synth</span></p>
                    <p>Device type: Instrument</p>
                </div>
            </aside>
        </main>

        <footer class="statusbar">
            <button class="plain info-btn" aria-label="Info"><svg width="6" height="9" viewBox="0 0 6 9"><path d="M2 0h2v2H2zM1 3h3v4.5h2V9H0V7.5h2v-3H1z" fill="currentColor"/></svg></button>
            <span class="bar-divider"></span>
            <nav class="views">
                <a href="#arrange" class="on">ARRANGE</a>
                <a href="#mix">MIX</a>
                <a href="#edit">EDIT</a>
            </nav>
            <span class="bar-divider"></span>
            <div class="panel-toggles">
                <button class="plain" aria-label="Detail editor"><svg width="12" height="12" viewBox="0 0 12 12"><path d="M0 1h3M4 3.5h3M0 6h3M9 6h3M4 8.5h3M0 11h3M9 11h3" stroke="currentColor" stroke-width="2"/></svg></button>
                <button class="plain" aria-label="Automation editor"><svg width="12" height="12" viewBox="0 0 12 12"><circle cx="3" cy="9" r="2" fill="none" stroke="currentColor" stroke-width="1.6"/><circle cx="8.5" cy="3" r="2" fill="none" stroke="currentColor" stroke-width="1.6"/><path d="M4.5 7.500C6 6 8 7 8 5" fill="none" stroke="currentColor" stroke-width="1.6"/></svg></button>
                <button class="plain on" aria-label="Device panel"><svg width="16" height="13" viewBox="0 0 16 13"><rect x="1" y="1" width="14" height="11" rx="2" fill="none" stroke="currentColor" stroke-width="2"/><path d="M3 1v11" stroke="currentColor" stroke-width="3"/></svg></button>
                <button class="plain" aria-label="Mixer panel"><svg width="11" height="11" viewBox="0 0 11 11"><path d="M1.5 0v11M5.5 0v11M9.5 0v11" stroke="currentColor" stroke-width="3"/></svg></button>
            </div>
            <dl class="hints">
                <div><dt>PLAYING</dt><dd>On</dd></div>
                <div><dt>CLICK</dt><dd>Play Or Pause</dd></div>
                <div><dt>CTRL+CLICK</dt><dd>Tap Tempo</dd></div>
                <div><dt>RIGHT-CLICK</dt><dd>Tap Tempo</dd></div>
            </dl>
            <div class="right-toggles">
                <button class="plain on" aria-label="Browser"><svg width="12" height="10"><use href="#i-folder"/></svg></button>
                <button class="plain" aria-label="Project"><svg width="9" height="11" viewBox="0 0 9 11"><path d="M0 0h5l4 4v7H0z" fill="currentColor"/></svg></button>
                <button class="plain" aria-label="Studio I/O"><svg width="12" height="11"><use href="#i-swap"/></svg></button>
                <button class="plain" aria-label="Mappings"><svg width="11" height="12" viewBox="0 0 11 12"><path d="M3 0h2v4h4l2 1v4l-2 3H4L0 7V5l3 2z" fill="currentColor"/></svg></button>
                <span class="bar-divider"></span>
                <button class="plain" aria-label="On-screen keyboard"><svg width="12" height="11"><use href="#i-piano"/></svg></button>
            </div>
        </footer>
    </div>
    <script src="script.js"></script>
</body>
</html>
```
FILE: styles.css
```css
* {
    box-sizing: border-box;
}
body {
    margin: 0;
    font-family: Lato, sans-serif;
    font-size: 11px;
    line-height: 14px;
    color: #e6e6e6;
    background-color: #2e2e2e;
}
button, input, select {
    font-family: inherit;
    font-size: 11px;
    line-height: 14px;
    color: inherit;
    margin: 0;
    padding: 0;
}
h1, h2, p, ul, dl, dd {
    margin: 0;
    padding: 0;
}
h1, h2 {
    font-size: 11px;
}
svg {
    display: block;
    flex: none;
}
.sprite {
    width: 0;
    height: 0;
    position: absolute;
}
.plain {
    background: none;
    border: none;
    display: flex;
    align-items: center;
    justify-content: center;
}
.flip {
    transform: rotate(180deg);
}
.window {
    height: 100vh;
    display: flex;
    flex-direction: column;
    border: 1px solid #7a7a7a;
    padding: 0 3px;
    overflow: hidden;
}

/* title bar */
.titlebar {
    height: 35px;
    flex: none;
    display: grid;
    grid-template-columns: auto auto 1fr auto;
    align-items: center;
    padding-left: 5px;
    position: relative;
}
.template {
    width: 57px;
    height: 22px;
    border: none;
    border-radius: 3px;
    background: linear-gradient(#10a3a8, #0e9093);
    color: #fff;
}
.doc-tab {
    margin-left: 7px;
    width: 85px;
    height: 22px;
    border: 2px solid #666;
    border-radius: 3px;
    display: flex;
    align-items: center;
    justify-content: space-between;
    padding: 0 5px;
    color: #fff;
}
.doc-play {
    width: 7px;
    height: 7px;
    color: #aaa;
}
.x-icon {
    width: 8px;
    height: 8px;
}
.logo-wrap {
    position: absolute;
    inset: 0;
    display: flex;
    align-items: center;
    justify-content: center;
    pointer-events: none;
}
.logo {
    width: 32px;
    height: 16px;
}
.window-buttons {
    grid-column: 4;
    display: flex;
    align-items: center;
}
.window-buttons button {
    width: 37px;
    height: 24px;
}
.window-buttons svg {
    width: 10px;
    height: 10px;
}
.status-dot {
    width: 9px;
    height: 9px;
    border-radius: 50%;
    background-color: #c4c4c4;
    margin-right: 17px;
}
.win-divider {
    width: 1px;
    height: 23px;
    background-color: #999;
    margin-right: 3px;
}

/* toolbar */
.toolbar {
    height: 45px;
    flex: none;
    display: flex;
    align-items: center;
    background-color: #535353;
    border-radius: 3px;
    padding: 0 4px;
    gap: 7px;
}
.btn-group {
    display: flex;
    gap: 1px;
    padding: 1px;
    background-color: #3c3c3c;
    border-radius: 4px;
    overflow: hidden;
}
.transport {
    margin-right: -4px;
}
.tool {
    width: 39px;
    height: 35px;
    border: none;
    display: flex;
    align-items: center;
    justify-content: center;
    background: linear-gradient(#7b7b7b, #686868);
    color: #fff;
}
.tool.has-menu {
    background: linear-gradient(135deg, transparent 50%, #bbb 50%) bottom right / 8px 8px no-repeat, linear-gradient(#7b7b7b, #686868);
}
.tool.active {
    background: linear-gradient(#ff8d1c, #ff8210);
}
.tool.dim {
    background: linear-gradient(#686868, #5e5e5e);
}
.display {
    display: flex;
    height: 41px;
    border-radius: 4px;
    background-color: #1a1a1a;
    margin: 0 -1px;
}
.cell {
    border-right: 1px solid #4a4a4a;
    display: flex;
}
.cell:last-child {
    border-right: none;
}
.cell-meters {
    width: 53px;
    display: grid;
    grid-template-columns: 13px 21px;
    grid-template-rows: 20px 20px;
    align-items: center;
    column-gap: 4px;
    padding-left: 6px;
    color: #3fb4f5;
}
.load {
    height: 9px;
    background-color: #243540;
}
.load i {
    display: block;
    width: 3px;
    height: 9px;
    background-color: #22939a;
}
.io-bars {
    display: grid;
    gap: 1px;
}
.io-bars i {
    height: 4px;
    background-color: #243540;
}
.cell-tempo, .cell-pos {
    flex-direction: column;
    align-items: flex-end;
    padding: 2px 8px 0 0;
    font-family: "DejaVu Sans Mono", monospace;
    font-size: 15px;
    line-height: 20px;
    color: #3fb4f5;
}
.cell-tempo {
    width: 68px;
}
.cell-pos {
    width: 104px;
}
.cell-click {
    width: 36px;
    flex-direction: column;
    align-items: center;
    justify-content: space-between;
    padding: 4px 0;
}
.cell-loop {
    width: 64px;
    align-items: center;
    justify-content: space-between;
    padding: 0 10px 0 11px;
}
.cell-loop > svg {
    overflow: visible;
}
.punch {
    height: 28px;
    display: flex;
    flex-direction: column;
    justify-content: space-between;
}

/* workspace */
.workspace {
    flex: 1;
    min-height: 0;
    margin-top: 3px;
    padding-right: 1px;
    display: grid;
    grid-template-columns: 161px minmax(0, 1fr) 222px;
    gap: 3px;
}
.inspector {
    border: 2px solid #545454;
    border-radius: 3px;
    display: flex;
    align-items: center;
    justify-content: center;
    color: #fff;
}
.center {
    min-width: 0;
    min-height: 0;
    display: flex;
    flex-direction: column;
    gap: 3px;
}
.arranger {
    flex: 1;
    min-height: 0;
    border: 2px solid #545454;
    border-radius: 3px;
    background-color: #404040;
    display: grid;
    grid-template-columns: 524px minmax(0, 1fr);
    grid-template-rows: minmax(0, 1fr) 23px;
    column-gap: 6px;
}

/* clip launcher */
.launcher {
    background-color: #0c0c0c;
    padding: 1px 1px 0 0;
    display: flex;
    flex-direction: column;
}
.row {
    height: 43px;
    flex: none;
    margin-bottom: 1px;
    display: grid;
    grid-template-columns: 199px 26px 85px 85px 85px 12px 25px;
    column-gap: 1px;
}
.row-head {
    height: 37px;
}
.head-tools {
    display: flex;
    justify-content: space-between;
    background-color: #404040;
}
.view-toggles {
    display: flex;
    background-color: #2e2e2e;
    color: #ff8410;
}
.view-toggles button {
    width: 38px;
}
.pointer-tool {
    width: 40px;
    background-color: #545454;
    gap: 7px;
    justify-content: flex-end;
    padding-right: 2px;
    color: #999;
}
.stop-cell, .end-cell {
    background-color: #545454;
    display: flex;
    align-items: center;
    justify-content: center;
}
.stop-cell i {
    width: 9px;
    height: 9px;
    background-color: #a4a4a4;
}
.end-cell svg {
    width: 13px;
    height: 14px;
    color: #6a6a6a;
}
.scene {
    background-color: #545454;
    border-top: 3px solid #7c7c7c;
    display: flex;
    align-items: center;
    gap: 8px;
    padding-left: 7px;
    color: #fff;
    overflow: hidden;
}
.scene svg {
    width: 8px;
    height: 11px;
    color: #999;
}
.slot {
    background-color: #2e2e2e;
    display: flex;
    align-items: center;
    padding-left: 5px;
    overflow: hidden;
}
.slot i {
    width: 9px;
    height: 9px;
    flex: none;
    background-color: #4c4c4c;
}
.slot i.round {
    border-radius: 50%;
    background-color: #a0a0a0;
}
.slot.focus {
    background-color: #676767;
    border: 2px solid #c4c4c4;
    border-radius: 2px;
    padding-left: 3px;
}
.cut {
    box-shadow: inset -6px 0 6px -4px #1a1a1a;
}
.track {
    margin-left: 1px;
    border-left: 6px solid #8a8a8a;
    background-color: #545454;
    display: grid;
    grid-template-columns: 16px 79px 21px 21px 21px 11px;
    grid-template-rows: 18px 18px;
    gap: 2px 3px;
    padding: 3px 0 2px 6px;
    align-items: center;
}
.track.selected {
    background-color: #747474;
}
.track.orange {
    border-left-color: #ff5a0a;
}
.track.green {
    border-left-color: #70961a;
}
.name {
    grid-column: 1 / 3;
    color: #fff;
}
.kind {
    width: 12px;
    height: 12px;
    color: #b4b4b4;
}
.mini {
    height: 18px;
    border: 1px solid #3a3a3a;
    border-radius: 3px;
    background: linear-gradient(#828282, #6c6c6c);
    color: #fff;
    font-size: 12px;
    font-weight: 900;
    display: flex;
    align-items: center;
    justify-content: center;
}
.dot {
    width: 9px;
    height: 9px;
    border-radius: 50%;
    background-color: #fff;
}
.mini.armed {
    background: #f90d0d;
}
.armed .dot {
    background-color: #111;
}
.mini.off {
    background: #5e5e5e;
}
.off .dot {
    background-color: #a0a0a0;
}
.fader {
    appearance: none;
    grid-column: 2 / 5;
    height: 18px;
    width: 100%;
    border: 2px solid #1c1c1c;
    border-radius: 3px;
    background: linear-gradient(#653f17, #653f17) 0 0 / var(--level) 100% no-repeat #1c1c1c;
}
.fader::-webkit-slider-thumb {
    appearance: none;
    width: 2px;
    height: 14px;
    background-color: #f5851f;
}
.meter {
    grid-column: 6;
    grid-row: 1 / 3;
    height: 37px;
    background-color: #1a1a1a;
    display: flex;
    gap: 1px;
    padding: 18px 1px 1px;
}
.meter i {
    flex: 1;
    background: linear-gradient(#8fce22 0 2px, #1a1a1a 2px 4px, #8fce22 4px 60%, #2f8a2f);
}
.empty-tracks {
    flex: 1;
    padding-top: 5px;
}
.empty-tracks button {
    width: 201px;
    color: #999;
}

/* timeline */
.timeline {
    --beat: 412px;
    --lead: 24px;
    position: relative;
    display: flex;
    flex-direction: column;
    overflow: hidden;
    background-color: #777;
}
.ruler {
    height: 38px;
    flex: none;
    margin-bottom: 1px;
    background:
        repeating-linear-gradient(90deg, #8a8a8a 0 1px, transparent 1px 412px) var(--lead) 22px / 100% 16px no-repeat,
        repeating-linear-gradient(90deg, #5f5f5f 0 1px, transparent 1px 103px) var(--lead) 24px / 100% 14px no-repeat,
        #323232;
}
.start-flag {
    margin: 2px 0 0 24px;
}
.bars {
    display: flex;
    height: 14px;
    padding-left: var(--lead);
}
.bars span {
    flex: none;
    width: var(--beat);
    padding-left: 4px;
    color: #fff;
}
.loop {
    margin-left: var(--lead);
    width: 413px;
    height: 12px;
    border: 1px solid #c4c4c4;
    background-color: #686868;
}
.lane {
    height: 43px;
    flex: none;
    margin-bottom: 1px;
    background:
        linear-gradient(rgba(255, 255, 255, 0.08), rgba(255, 255, 255, 0.08)) var(--lead) 0 / var(--beat) 100% no-repeat,
        repeating-linear-gradient(90deg, #7d7d7d 0 1px, transparent 1px 412px) var(--lead) 0 / 100% 100% no-repeat,
        repeating-linear-gradient(90deg, #8d8d8d 0 1px, transparent 1px 103px) var(--lead) 0 / 100% 100% no-repeat,
        #999;
}
.lane.rest {
    flex: 1;
    margin-bottom: 0;
    background:
        linear-gradient(rgba(255, 255, 255, 0.02), rgba(255, 255, 255, 0.02)) var(--lead) 0 / var(--beat) 100% no-repeat,
        repeating-linear-gradient(90deg, #747474 0 1px, transparent 1px 412px) var(--lead) 0 / 100% 100% no-repeat,
        repeating-linear-gradient(90deg, #828282 0 1px, transparent 1px 103px) var(--lead) 0 / 100% 100% no-repeat,
        #8c8c8c;
}
.clips {
    display: flex;
    padding-left: var(--lead);
}
.clip {
    flex: none;
    width: var(--beat);
    height: 43px;
    border: 1px solid #111;
    border-right: none;
    background: linear-gradient(#d96931, #cf652f) 3px 2px / 404px 18px no-repeat #de6a33;
    color: #4a1c08;
    display: grid;
}
.clip span, .clip svg {
    grid-area: 1 / 1;
}
.clip span {
    padding: 5px 6px;
}
.clip svg {
    width: 411px;
    height: 43px;
}
.playhead {
    position: absolute;
    left: 399px;
    top: 39px;
    bottom: 0;
    width: 2px;
    background-color: rgba(50, 50, 50, 0.75);
}

/* arranger footer */
.foot {
    display: flex;
    align-items: center;
}
.launcher-foot {
    padding-left: 3px;
}
.foot-btn {
    width: 17px;
    height: 17px;
    margin-right: 3px;
    border-radius: 3px;
}
.foot-btn.on {
    background-color: #363636;
    color: #ff8410;
}
.foot-btn.light {
    color: #ccc;
}
.foot-btn.wide {
    width: 21px;
    margin: 0 50px 0 9px;
}
.scroller {
    flex: 1;
    display: flex;
    align-items: center;
    gap: 8px;
    padding-left: 4px;
    color: #999;
}
.launcher-foot .scroller {
    margin-left: 117px;
    padding-right: 5px;
}
.track-line {
    flex: 1;
}
.thumb {
    height: 10px;
    border-radius: 4px;
    background-color: #7c7c7c;
}
.thumb.short {
    width: 27%;
}
.thumb.long {
    width: 59%;
}
.beat-grid {
    appearance: none;
    width: 26px;
    border: none;
    background: none;
    color: #ccc;
}
.tiny {
    color: #999;
}
.tiny.up {
    transform: rotate(180deg);
    margin: 0 6px 0 5px;
    color: #ccc;
}

/* device chain */
.devices {
    flex: none;
    border: 2px solid #7a7a7a;
    border-radius: 3px;
    display: flex;
    align-items: stretch;
    padding: 12px 0;
    overflow: hidden;
    background: linear-gradient(#ff5a0a, #ff5a0a) 0 0 / 4px 100% no-repeat #0b0b0b;
}
.chain-name {
    width: 34px;
    display: flex;
    align-items: center;
    justify-content: center;
    padding-left: 2px;
    color: #fff;
}
.chain-name span, .device-head span {
    writing-mode: vertical-rl;
    transform: rotate(180deg);
}
.port {
    width: 21px;
    display: flex;
    flex-direction: column;
    align-items: center;
    justify-content: center;
    position: relative;
    color: #8a8a8a;
}
.port.boxed {
    width: 15px;
    margin: 3px 3px 3px 0;
    border: 2px solid #8a8a8a;
}
.port svg {
    width: 9px;
    height: 9px;
}
.led {
    position: absolute;
    top: 8px;
    width: 9px;
    height: 9px;
    background-color: #f2d03c;
}
.boxed .led {
    top: 3px;
}
.vu {
    position: absolute;
    bottom: 6px;
    width: 9px;
    height: 27px;
    display: flex;
    gap: 1px;
}
.vu i {
    flex: 1;
    background: linear-gradient(#e8600c 0 1px, #0b0b0b 1px 2px, #f2d03c 2px 4px, #0b0b0b 4px 5px, #8fce22 5px 19px, #2f8a2f);
}
.vu.hot {
    height: 30px;
}
.vu.hot i {
    background: linear-gradient(#e8600c 0 2px, #0b0b0b 2px 5px, #f2b03c 5px 7px, #8fce22 8px 22px, #2f8a2f);
}
.device {
    height: 219px;
    border-radius: 6px;
    background-color: #545454;
    display: flex;
    gap: 3px;
    padding: 3px 3px 3px 0;
}
.device-head {
    width: 27px;
    margin: -3px 0;
    padding: 8px 0;
    border-radius: 6px 0 0 6px;
    background-color: #3c3c3c;
    display: flex;
    flex-direction: column;
    align-items: center;
    color: #a0a0a0;
    gap: 10px;
    position: relative;
}
.device-head span {
    position: absolute;
    inset: 0;
    margin: auto;
    width: 14px;
    height: 120px;
    text-align: center;
    color: #fff;
}
.power {
    width: 11px;
    height: 12px;
    color: #ff8410;
}
.preset {
    width: 12px;
    height: 10px;
}
.ico-frame {
    width: 14px;
    height: 12px;
    margin-top: auto;
}
.ico-grid {
    width: 12px;
    height: 7px;
    margin-top: auto;
}
.ico-frame + .ico-grid {
    margin-top: 0;
}
.ico-mod {
    width: 12px;
    height: 8px;
}
.col {
    display: flex;
    flex-direction: column;
    gap: 3px;
}
.panel, .well {
    border-radius: 3px;
    background-color: #424242;
}
.well {
    background-color: #2e2e2e;
}
.device h2 {
    font-weight: 400;
    text-align: center;
    color: #fff;
}

/* knobs, the svg dials come from script.js */
.knob {
    --arc: #ff8410;
    --ring: #5e5e5e;
    --body-top: #686868;
    --body-bottom: #888;
    --hand: #fff;
    position: relative;
    display: flex;
    flex-direction: column;
    align-items: center;
    color: #d0d0d0;
    white-space: nowrap;
}
.knob input {
    position: absolute;
    top: 0;
    width: 26px;
    height: 26px;
    opacity: 0;
}
.knob > span {
    height: 14px;
    margin-top: -3px;
    display: flex;
    align-items: center;
    justify-content: center;
    gap: 3px;
}
.knob.dim .dial {
    opacity: 0.6;
}
.knob.dim > span {
    color: #888;
}
.knob.gray-arc {
    --ring: #555;
}
.knob > .lit, .knob.dim > .lit {
    color: #fff;
}
.knob > .mode {
    gap: 7px;
}
.knob.lime {
    --arc: #b4e01e;
}
.knob.yellow {
    --arc: #f7dc3c;
}
.knob.white {
    --body-top: #c4c4c4;
    --body-bottom: #f0f0f0;
    --hand: #111;
    --ring: #444;
}
.red .knob {
    --arc: #f5204a;
}
.blue .knob {
    --arc: #5aa5ea;
}
.knob.link::after {
    content: "";
    position: absolute;
    left: calc(50% + 18px);
    top: 19px;
    width: 8px;
    height: 1px;
    background-color: #666;
}
.knob.small.link::after {
    left: calc(50% + 14px);
    top: 15px;
    width: 4px;
}
.badge {
    font-size: 9px;
    line-height: 11px;
    padding: 0 3px;
    border-radius: 3px;
    background-color: #999;
    color: #2e2e2e;
}
.badge.white {
    padding: 0 1px;
    background-color: #fff;
}

/* polysynth */
.osc {
    height: 105px;
    background-color: #424242;
}
.wave {
    width: 209px;
    height: 37px;
    background-color: #1e1e1e;
    fill: none;
    stroke: #ff8410;
    stroke-width: 1;
}
.osc-grid {
    display: grid;
    grid-template-columns: 33px 33px 29px 29px 33px 29px;
    gap: 3px;
    padding: 2px 4px 4px;
}
.osc-grid .knob {
    height: 42px;
}
.field, .bar, .retrig, .note-btn, .time-field {
    appearance: none;
    width: 100%;
    min-width: 0;
    height: 17px;
    border: none;
    border-radius: 3px;
    background-color: #1e1e1e;
    color: #ff8410;
}
.field {
    text-align: right;
    padding: 2px 5px 0 0;
}
.retrig {
    color: #999;
    font-weight: 700;
}
.bar::-webkit-slider-thumb {
    appearance: none;
    width: 1px;
    height: 13px;
    background-color: #ff8410;
}
.bar.faint {
    background-color: #333;
}
.bar.faint::-webkit-slider-thumb {
    background-color: #965a26;
}
.switches {
    display: grid;
    gap: 1px;
    padding: 1px;
    background-color: #333;
    border-radius: 4px;
    overflow: hidden;
}
.switches button {
    height: 15px;
    border: none;
    background: linear-gradient(#757575, #6a6a6a);
    color: #fff;
    display: flex;
    align-items: center;
    justify-content: center;
}
.switches button.on {
    background: #ff8613;
    color: #1c1c1c;
}
.switches svg {
    width: 20px;
    height: 10px;
    fill: none;
    stroke: currentColor;
    stroke-width: 1.2;
}
.three {
    width: 141px;
    grid-template-columns: repeat(3, 1fr);
}
.four {
    width: 213px;
    grid-template-columns: repeat(4, 1fr);
}
.mix-grid {
    flex: 1;
    display: grid;
    grid-template-columns: repeat(3, 1fr);
    grid-template-rows: 56px 60px 1fr;
    padding: 8px 4px 0;
    align-items: start;
}
.knob .one-two {
    width: 34px;
    justify-content: space-between;
    padding: 0 4px;
    gap: 18px;
}
.one-two em {
    font-style: normal;
    color: #888;
}
.five-grid {
    display: grid;
    grid-template-columns: repeat(5, 1fr);
    padding: 7px 6px 0;
    align-items: start;
}
.five-grid.top {
    height: 69px;
}
.five-grid.top .knob > span, .pick {
    margin-top: 0;
}
.knob .keys, .knob .eg {
    gap: 1px;
}
.curve {
    border-radius: 3px;
    background-color: #242424;
}
.pick {
    height: 14px;
    display: flex;
    align-items: center;
    justify-content: center;
    gap: 6px;
    color: #fff;
}
.pick select {
    appearance: none;
    width: 22px;
    border: none;
    background: none;
}
.egs {
    height: 105px;
    grid-template-rows: 56px 1fr;
}
.egs .knob > span {
    margin-top: 1px;
    color: #fff;
}
.eg-name {
    display: flex;
    flex-direction: column;
    align-items: center;
    gap: 2px;
    padding-top: 3px;
    color: #2fe08c;
}
.slot-btn {
    --mark: #3f6a80;
    height: 33px;
    border: none;
    border-radius: 3px;
    padding: 3px;
    color: #fff;
    font-weight: 700;
    background:
        linear-gradient(var(--mark), var(--mark)) center 3px / calc(100% - 6px) 2px no-repeat,
        linear-gradient(var(--mark), var(--mark)) 3px 3px / 1px 4px no-repeat,
        linear-gradient(var(--mark), var(--mark)) calc(100% - 3px) 3px / 1px 4px no-repeat,
        #2e2e2e;
}
.slot-btn.lime {
    --mark: #b4e01e;
    height: 29px;
}
.slot-btn.gold {
    --mark: #f7dc3c;
}
.fx-col {
    width: 69px;
}
.output {
    flex: 1;
    padding-top: 7px;
    color: #aaa;
}
.pan-row {
    display: flex;
    align-items: flex-end;
    justify-content: center;
}
.pan-row span {
    width: 6px;
    height: 11px;
}
.vel-row {
    display: flex;
    justify-content: center;
    gap: 2px;
    margin-top: 10px;
}
.vel-icons {
    display: flex;
    align-items: center;
    justify-content: space-between;
    padding: 0 15px;
    height: 10px;
    margin-bottom: 2px;
}

/* delay */
.delay-main {
    width: 117px;
}
.delay-time {
    height: 141px;
    padding: 3px 4px 4px;
    display: flex;
    flex-direction: column;
    gap: 3px;
}
.delay-time h2 {
    margin-bottom: 12px;
}
.time-row {
    display: grid;
    grid-template-columns: 17px 1fr;
    gap: 3px;
}
.note-btn {
    display: flex;
    align-items: center;
    justify-content: center;
}
.time-field {
    text-align: right;
    padding: 2px 4px 0 0;
    color: #94602f;
    background: linear-gradient(#94602f, #94602f) 3px 12px / 3px 2px no-repeat, linear-gradient(#4c4c4c, #4c4c4c) 3px 3px / 3px 11px no-repeat #333;
}
.sixteen {
    grid-template-columns: repeat(4, 1fr);
}
.cut-panel {
    flex: 1;
    padding-top: 3px;
}
.cut-row {
    display: flex;
    justify-content: space-around;
    padding: 0 2px;
    margin-top: -2px;
}
.delay-fb {
    width: 53px;
}
.stack-knobs {
    flex: 1;
    display: flex;
    flex-direction: column;
    justify-content: flex-end;
    gap: 23px;
    padding-bottom: 4px;
}

/* reverb */
.early {
    width: 61px;
    padding: 3px 4px 0;
    display: flex;
    flex-direction: column;
}
.device .early h2 {
    color: #ff8410;
}
.one {
    margin: 3px 0 5px;
}
.one button {
    height: 17px;
}
.early > label {
    color: #d0d0d0;
}
.early > input {
    width: 100%;
    height: 19px;
    margin: 1px 0 10px;
    border: none;
    border-radius: 3px;
    background: #d0d0d0;
    color: #111;
    text-align: right;
    padding: 2px 4px 0 0;
}
.late {
    width: 309px;
    border-radius: 5px;
    background-color: #1e1e1e;
    padding-top: 3px;
}
.device .late h2 {
    color: #f7dc3c;
    margin-bottom: 3px;
}
.spectrum {
    width: 100%;
    height: 109px;
}
.freq {
    font-size: 28px;
    fill: #8a8a8a;
}
.handles {
    font-size: 26px;
    text-anchor: middle;
    fill: #111;
}
.late-knobs {
    height: 80px;
    display: grid;
    grid-template-columns: 60px 52px 76px 52px 60px;
    justify-content: center;
    align-items: end;
}
.banded {
    display: flex;
    flex-direction: column;
    align-items: center;
    white-space: nowrap;
}
.banded > span {
    margin-bottom: 2px;
}
.red {
    color: #f5204a;
}
.blue {
    color: #5aa5ea;
}
.reverb-fx {
    width: 61px;
}
.reverb-fx .stack-knobs {
    gap: 11px;
}

/* browser */
.browser {
    min-height: 0;
    border: 2px solid #545454;
    border-radius: 3px;
    background-color: #424242;
    display: flex;
    flex-direction: column;
}
.browser h1 {
    padding: 4px 7px;
    color: #fff;
}
.browser-tabs {
    display: flex;
    justify-content: space-between;
    height: 21px;
    color: #ddd;
}
.browser-tabs button {
    width: 29px;
    height: 21px;
    border-radius: 3px;
}
.browser-tabs .on {
    background-color: #2e2e2e;
}
.browser-tabs svg {
    width: 15px;
    height: 13px;
}
.browser-tabs .big {
    width: 16px;
    height: 16px;
}
.search {
    height: 21px;
    margin: 2px 0 4px;
    border-radius: 3px;
    background-color: #1c1c1c;
    display: flex;
    align-items: center;
    padding: 0 10px 0 7px;
}
.search input {
    flex: 1;
    min-width: 0;
    border: none;
    background: none;
    outline: none;
}
.section {
    height: 20px;
    flex: none;
    border: none;
    border-bottom: 1px solid #2e2e2e;
    background: #444;
    display: flex;
    align-items: center;
    gap: 6px;
    padding-left: 8px;
    color: #fff;
}
.section.light {
    background: #545454;
    color: #e6e6e6;
}
.locations {
    flex: 1;
    background-color: #0b0b0b;
    padding: 1px 2px 0;
    list-style: none;
}
.locations li {
    height: 21px;
    display: flex;
    align-items: center;
    gap: 7px;
    padding: 0 7px 0 5px;
}
.locations li.child {
    padding-left: 20px;
    gap: 6px;
}
.locations .current {
    background-color: #2d3d4a;
    border: 1px solid #3a4f5e;
}
.locations em {
    margin-left: auto;
    font-style: normal;
    font-size: 10px;
    color: #888;
}
.ring {
    width: 11px;
    height: 11px;
    border: 2px solid #aaa;
    border-radius: 50%;
}
.list-wrap {
    margin-top: 3px;
    height: 441px;
    flex: none;
    background-color: #0b0b0b;
    overflow: hidden;
    position: relative;
}
.device-list {
    list-style: none;
    margin: -4px 2px 0;
}
.device-list li {
    height: 20px;
    display: flex;
    align-items: center;
    gap: 5px;
    padding: 0 13px 0 4px;
    color: #f0f0f0;
}
.device-list li.current {
    background-color: #2d3d4a;
}
.device-list svg {
    width: 15px;
    height: 15px;
}
.device-list .star {
    width: 11px;
    height: 11px;
    margin-left: auto;
    color: #4d3f1c;
}
.device-list .current .star {
    color: #6e6338;
}
.device-list .fav {
    color: #f2c230;
}
.hw {
    color: #f2592c;
}
.layer {
    color: #ccc;
}
.note {
    color: #35b5ea;
}
.synth {
    color: #f7c414;
}
.scope {
    color: #b062e0;
}
.list-thumb {
    position: absolute;
    right: 0;
    top: 212px;
    width: 4px;
    height: 144px;
    background-color: #4a4a4a;
}
.info {
    flex: none;
    height: 69px;
    margin-top: 2px;
    padding: 4px 7px;
    border-radius: 3px;
    background-color: #1e1e1e;
    line-height: 15px;
    color: #fff;
}
.info strong {
    display: block;
}
.info p span {
    margin-right: 10px;
}
.info hr {
    border: none;
    height: 1px;
    background-color: #444;
    margin: 1px 0;
}

/* status bar */
.statusbar {
    height: 35px;
    flex: none;
    display: flex;
    align-items: center;
    color: #d0d0d0;
}
.info-btn {
    width: 32px;
    color: #ff8410;
}
.bar-divider {
    width: 1px;
    height: 20px;
    margin: 0 2px;
    background-color: #8a8a8a;
}
.views {
    display: flex;
    gap: 16px;
    padding: 0 14px;
}
.views a {
    color: #e6e6e6;
    text-decoration: none;
}
.views a.on {
    color: #ff8410;
}
.panel-toggles {
    display: flex;
    padding-left: 2px;
}
.panel-toggles button, .right-toggles button {
    width: 31px;
    height: 24px;
}
.statusbar .on {
    color: #ff8410;
}
.hints {
    display: flex;
    gap: 20px;
    margin-left: 19px;
}
.hints div {
    display: flex;
    gap: 8px;
}
.hints dt {
    font-size: 10px;
}
.hints dd {
    color: #999;
}
.right-toggles {
    margin-left: auto;
    padding-right: 1px;
    display: flex;
    align-items: center;
}
.right-toggles .bar-divider {
    margin: 0 3px 0 6px;
}
```
FILE: script.js
```js
// Draws a dial in front of every knob's range input.
// The sweep runs from -140deg (min) to 140deg (max), 0deg is straight up.
const SIZES = {
    small: { box: 30, ring: 12.5, body: 9, hand: [4, 8], stroke: 2 },
    medium: { box: 38, ring: 16.5, body: 12, hand: [3, 12], stroke: 2 },
    large: { box: 46, ring: 20.5, body: 15.5, hand: [4, 14], stroke: 2 },
    huge: { box: 62, ring: 28.5, body: 23, hand: [6, 22], stroke: 2 }
};

function point(center, radius, angle) {
    const rad = (angle - 90) * Math.PI / 180;
    return (center + radius * Math.cos(rad)).toFixed(2) + ' ' + (center + radius * Math.sin(rad)).toFixed(2);
}

function arc(center, radius, from, to) {
    const large = to - from > 180 ? 1 : 0;
    return `M${point(center, radius, from)}A${radius} ${radius} 0 ${large} 1 ${point(center, radius, to)}`;
}

function toAngle(value) {
    return value * 2.8 - 140;
}

document.querySelectorAll('.knob').forEach(function(knob, index) {
    const name = Object.keys(SIZES).find(key => knob.classList.contains(key)) || 'medium';
    const size = SIZES[name];
    const c = size.box / 2;
    const angle = toAngle(Number(knob.querySelector('input').value));
    const origin = toAngle(Number(knob.dataset.from || 0));
    let start = Math.min(angle, origin);
    let end = Math.max(angle, origin);

    // a centred bipolar knob still shows a small mark at the top
    if (start === end && Math.abs(origin) < 1) {
        start = -4;
        end = 4;
    }

    const filled = start === end ? '' :
        `<path d="${arc(c, size.ring, start, end)}" fill="none" stroke="var(--arc)" stroke-width="${size.stroke}"/>`;

    knob.insertAdjacentHTML('afterbegin', `
        <svg class="dial" width="${size.box}" height="${size.box}">
            <linearGradient id="body${index}" x2="0" y2="1">
                <stop offset="0" stop-color="var(--body-bottom)"/>
                <stop offset="1" stop-color="var(--body-top)"/>
            </linearGradient>
            <path d="${arc(c, size.ring, -140, 140)}" fill="none" stroke="var(--ring)" stroke-width="${size.stroke}"/>
            ${filled}
            <circle cx="${c}" cy="${c}" r="${size.body + 1}" fill="#222"/>
            <circle cx="${c}" cy="${c}" r="${size.body}" fill="url(#body${index})"/>
            <path d="M${point(c, size.hand[0], angle)}L${point(c, size.hand[1], angle)}" stroke="var(--hand)" stroke-width="3"/>
        </svg>`);
});
```
